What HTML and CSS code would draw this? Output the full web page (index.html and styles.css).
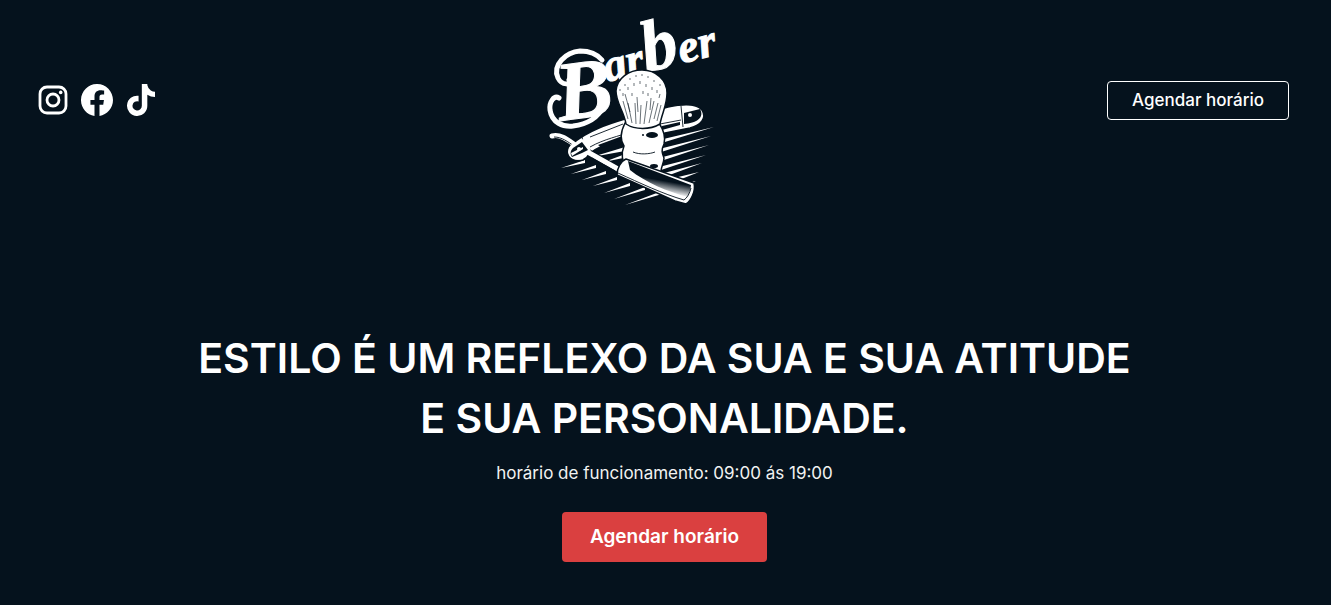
FILE: index.html
```html
<!DOCTYPE html>
<html lang="pt-BR">
<head>
<meta charset="utf-8">
<meta name="viewport" content="width=device-width, initial-scale=1">
<title>Barber</title>
<link rel="stylesheet" href="styles.css">
</head>
<body>
<header class="header">
  <nav class="social" aria-label="Redes sociais">
    <a class="social-link" href="#" aria-label="Instagram">
      <svg class="social-icon" viewBox="0 0 32 32"><rect x="3" y="3" width="26" height="26" rx="7" fill="none" stroke="currentColor" stroke-width="2.8"/><circle cx="16" cy="16" r="6" fill="none" stroke="currentColor" stroke-width="2.8"/><circle cx="23.7" cy="8.4" r="1.8" fill="currentColor"/></svg>
    </a>
    <a class="social-link" href="#" aria-label="Facebook">
      <svg class="social-icon" viewBox="0 0 16 16"><path fill="currentColor" d="M16 8.049c0-4.446-3.582-8.05-8-8.05C3.58 0-.002 3.603-.002 8.05c0 4.017 2.926 7.347 6.75 7.951v-5.625h-2.03V8.05H6.75V6.275c0-2.017 1.195-3.131 3.022-3.131.876 0 1.791.157 1.791.157v1.98h-1.009c-.993 0-1.303.621-1.303 1.258v1.51h2.218l-.354 2.326H9.25V16c3.824-.604 6.75-3.934 6.75-7.951"/></svg>
    </a>
    <a class="social-link" href="#" aria-label="TikTok">
      <svg class="social-icon" viewBox="0 0 448 512"><path fill="currentColor" d="M448,209.91a210.06,210.06,0,0,1-122.77-39.25V349.38A162.55,162.55,0,1,1,185,188.31V278.2a74.62,74.62,0,1,0,52.23,71.18V0l88,0a121.18,121.18,0,0,0,1.86,22.17h0A122.18,122.18,0,0,0,381,102.39a121.43,121.43,0,0,0,67,20.14Z"/></svg>
    </a>
  </nav>

  <svg class="logo" viewBox="532 0 200 200" role="img" aria-label="Barber">
    <defs>
      <linearGradient id="steel" x1="0.6" y1="0.2" x2="0.4" y2="0.85">
        <stop offset="0.5" stop-color="#05121d"/>
        <stop offset="1" stop-color="#fff"/>
      </linearGradient>
    </defs>
    <!-- speed lines -->
    <path class="ink" d="M714 127L655 141v4zM711 136L655 150v4zM709 145L655 159v4zM706 155L655 168v4zM702 163L664 173v4zM699 172L674 178v4zM696 181L684 184v3z
      M561 168L585 160v3zM571 174L596 165v3zM582 180L606 171v3zM593 186L617 177v3zM604 193L630 183v3zM614 199L645 187v3zM625 205L662 191v3zM592 157L625 147v4zM604 162L628 153v4z"/>
    <!-- lettering -->
    <text class="lettering lettering-cap" transform="translate(560 121) rotate(-8)">B</text>
    <text class="lettering" transform="translate(607 82) rotate(-14)"><tspan>ar</tspan><tspan class="lettering-tall">b</tspan><tspan>er</tspan></text>
    <path class="swash" d="M569 80C572 85 562 86 558 78C552 65 566 52 580 51C590 51 597 54 602 60"/>
    <path class="swash" d="M559 98C554 95 549 102 550 110C552 123 563 127 573 126C589 124 599 116 604 106"/>
    <!-- scales of the razor -->
    <path class="ink edge" d="M573 143C590 130 608 124 625 119L668 107C683 104 697 104 702 110C707 118 701 125 690 128L665 133L625 139C608 143 593 148 583 160C574 162 568 158 568 151C568 147 570 145 573 143Z"/>
    <path class="line" d="M582 137C583 143 586 147 591 150M590 147C604 139 620 136 630 132M660 124L681 120M681 106L683 127M590 137L623 124"/>
    <path class="shade" d="M684 113L700 109C705 118 696 123 684 124ZM598 145L625 135V138L602 148ZM662 126L680 122V125L662 130Z"/>
    <circle class="ink" cx="690" cy="115" r="2"/>
    <!-- tang -->
    <path class="tang-edge" d="M552 136C561 134 568 140 575 145L625 173"/>
    <path class="tang" d="M552 136C561 134 568 140 575 145L625 173"/>
    <path class="line" d="M554 137C562 137 568 142 574 146M592 158L615 171"/>
    <!-- pivot -->
    <path class="ink" d="M572 144L583 139L591 150L586 157C578 162 569 160 568 152C568 148 570 146 572 144Z"/>
    <path class="shade" d="M573 148L582 142L588 150L582 153L572 157C570 154 570 151 573 148Z"/>
    <circle class="ink" cx="579" cy="149" r="2"/>
    <path class="ink" d="M571 153L583 147V149L572 156Z"/>
    <!-- brush -->
    <path class="ink edge" d="M625 123C620 133 620 140 624 146C621 153 622 162 626 168L661 174C660 169 664 163 664 158C662 153 661 150 664 144C666 136 663 129 659 123Z"/>
    <path class="ink edge" d="M626 124C624 111 616 103 616 91C617 78 629 70 642 70C656 70 667 80 667 93C667 105 662 113 660 124C650 130 635 130 626 124Z"/>
    <path class="bristles" d="M628 119L623 101M632 123L628 103M636 124L635 103M640 124L641 105M644 124L647 101M649 123L654 101M654 119L658 103M657 121L661 105M630 112L625 94M638 112L637 97M650 110L651 98M659 98L660 94M620 91v-2M625 86v-2M630 80v-2M636 77v-2M642 76v-2M648 78v-2M654 82v-2M660 86v-2M628 90v-3M634 86v-3M640 84v-3M646 87v-3M652 90v-3M657 93v-3M632 96v-3M643 94v-3M648 96v-3M623 96v-3"/>
    <path class="line" d="M633 152C640 155 650 154 655 152"/>
    <ellipse class="shade" cx="652" cy="135" rx="6" ry="3"/>
    <circle class="shade" cx="643" cy="135" r="1"/>
    <ellipse class="shade" cx="654" cy="166" rx="4" ry="2"/>
    <!-- blade -->
    <path class="ink edge" d="M626 159L694 183C696 191 691 201 686 204L675 201 617 175C617 168 621 161 626 159Z"/>
    <path fill="url(#steel)" d="M628 161L691 185C691 189 689 193 688 197C668 192 645 182 630 170Z"/>
    <path class="line" d="M618 173C640 183 663 194 684 200C687 198 690 193 691 188"/>
  </svg>

  <button class="button button-outline" type="button">Agendar horário</button>
</header>

<main class="hero">
  <h1 class="hero-title">ESTILO É UM REFLEXO DA SUA E SUA ATITUDE E SUA PERSONALIDADE.</h1>
  <p class="hero-hours">horário de funcionamento: 09:00 ás 19:00</p>
  <button class="button button-primary" type="button">Agendar horário</button>
</main>
</body>
</html>
```
FILE: styles.css
```css
* {
  box-sizing: border-box;
}

body {
  margin: 0;
  min-height: 100vh;
  background: #05121d;
  color: #fff;
  font-family: Inter, "Open Sans", sans-serif;
}

.header {
  display: flex;
  align-items: center;
  justify-content: space-between;
  padding: 0 42px 0 37px;
}

.social {
  display: flex;
  gap: 12px;
}

.social-link {
  display: flex;
  color: inherit;
}

.social-icon {
  width: 32px;
  height: 32px;
}

.logo {
  width: 200px;
  height: 200px;
  overflow: visible;
}

.ink {
  fill: #fff;
}

.edge {
  stroke: #05121d;
  stroke-width: 1.5;
}

.shade {
  fill: #05121d;
}

.line,
.bristles {
  fill: none;
  stroke: #05121d;
  stroke-width: 0.9;
}

.bristles {
  stroke-width: 0.6;
}

.tang,
.tang-edge,
.swash {
  fill: none;
  stroke: #fff;
  stroke-width: 5;
  stroke-linecap: round;
}

.tang-edge {
  stroke: #05121d;
  stroke-width: 7;
}

.lettering {
  fill: #fff;
  stroke: #fff;
  stroke-width: 1;
  font: italic bold 46px "Liberation Serif", serif;
}

.lettering-cap {
  font-size: 84px;
}

.lettering-tall {
  font-size: 72px;
}

.button {
  border-radius: 4px;
  color: #fff;
  font-family: inherit;
  cursor: pointer;
}

.button-outline {
  padding: 8px 24px;
  border: 1px solid #fff;
  background: transparent;
  font-size: 17px;
  font-weight: 500;
  line-height: 21px;
}

.hero {
  display: flex;
  flex-direction: column;
  align-items: center;
  padding: 128px 26px 40px 24px;
  text-align: center;
}

.hero-title {
  max-width: 960px;
  margin: 0;
  font-size: 41px;
  font-weight: 600;
  line-height: 60px;
}

.hero-hours {
  margin: 12px 0 26px;
  color: #f2f2f2;
  font-size: 17px;
  line-height: 26px;
}

.button-primary {
  padding: 13px 28px;
  border: 0;
  background: #da4040;
  font-size: 19px;
  font-weight: 600;
  line-height: 24px;
}
```
